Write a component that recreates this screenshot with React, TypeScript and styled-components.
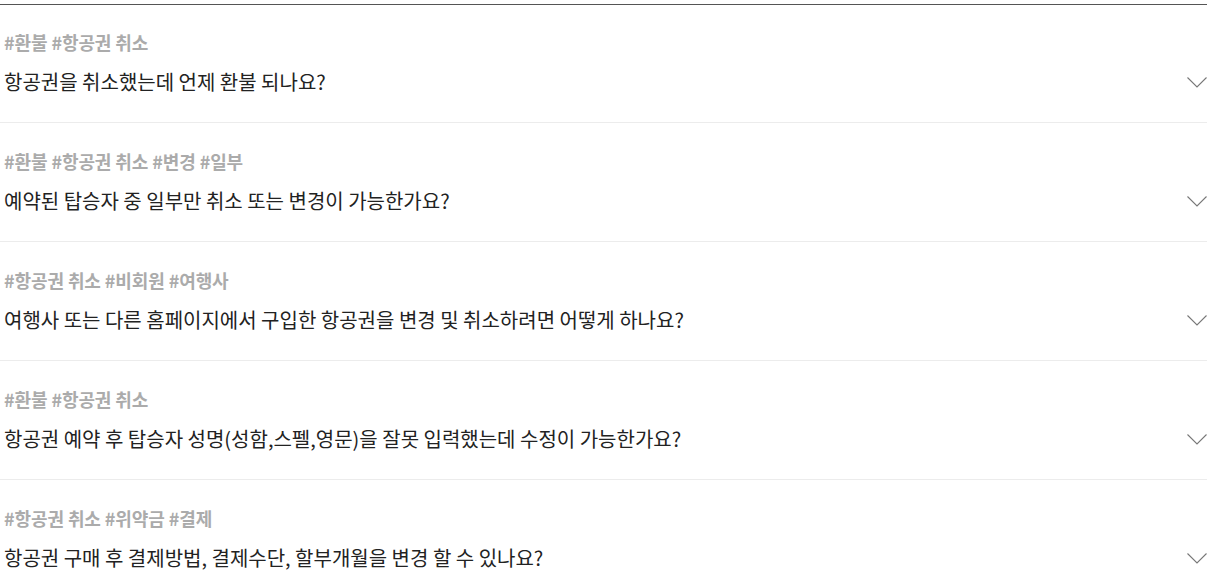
import React from 'react'
import styled, { createGlobalStyle } from 'styled-components'

const GlobalStyle = createGlobalStyle`
  body {
    margin: 0;
    background: #fff;
    font-family: "Noto Sans CJK KR", "Noto Sans", sans-serif;
  }
`

const Wrapper = styled.div`
  padding-top: 4px;
`

const List = styled.ul`
  list-style: none;
  margin: 0;
  padding: 0;
  border-top: 1px solid #555;
`

const Item = styled.li`
  padding: 26px 0 26px 4px;
  border-bottom: 1px solid #ececec;

  &:first-child {
    padding-top: 25px;
  }
`

const Tags = styled.div`
  font-size: 18px;
  line-height: 24px;
  font-weight: 700;
  color: #ababab;
  letter-spacing: -0.1px;
`

const Question = styled.div`
  margin-top: 14px;
  display: flex;
  align-items: center;
  justify-content: space-between;
  font-size: 20px;
  line-height: 28px;
  color: #222;
`

const Chevron = styled.svg`
  flex: none;
  width: 20px;
  height: 11px;
  margin-top: 1px;
`

const faqs = [
  { tags: '#환불 #항공권 취소', q: '항공권을 취소했는데 언제 환불 되나요?' },
  { tags: '#환불 #항공권 취소 #변경 #일부', q: '예약된 탑승자 중 일부만 취소 또는 변경이 가능한가요?' },
  { tags: '#항공권 취소 #비회원 #여행사', q: '여행사 또는 다른 홈페이지에서 구입한 항공권을 변경 및 취소하려면 어떻게 하나요?' },
  { tags: '#환불 #항공권 취소', q: '항공권 예약 후 탑승자 성명(성함,스펠,영문)을 잘못 입력했는데 수정이 가능한가요?' },
  { tags: '#항공권 취소 #위약금 #결제', q: '항공권 구매 후 결제방법, 결제수단, 할부개월을 변경 할 수 있나요?' },
]

const App = () => {
  return (
    <>
      <GlobalStyle />
      <Wrapper>
        <List>
          {faqs.map((f, i) => (
            <Item key={i}>
              <Tags>{f.tags}</Tags>
              <Question>
                <span>{f.q}</span>
                <Chevron viewBox="0 0 20 11">
                  <path d="M0.5 0.5 L10 10 L19.5 0.5" fill="none" stroke="#777" strokeWidth="1.1" />
                </Chevron>
              </Question>
            </Item>
          ))}
        </List>
      </Wrapper>
    </>
  )
}

export default App
